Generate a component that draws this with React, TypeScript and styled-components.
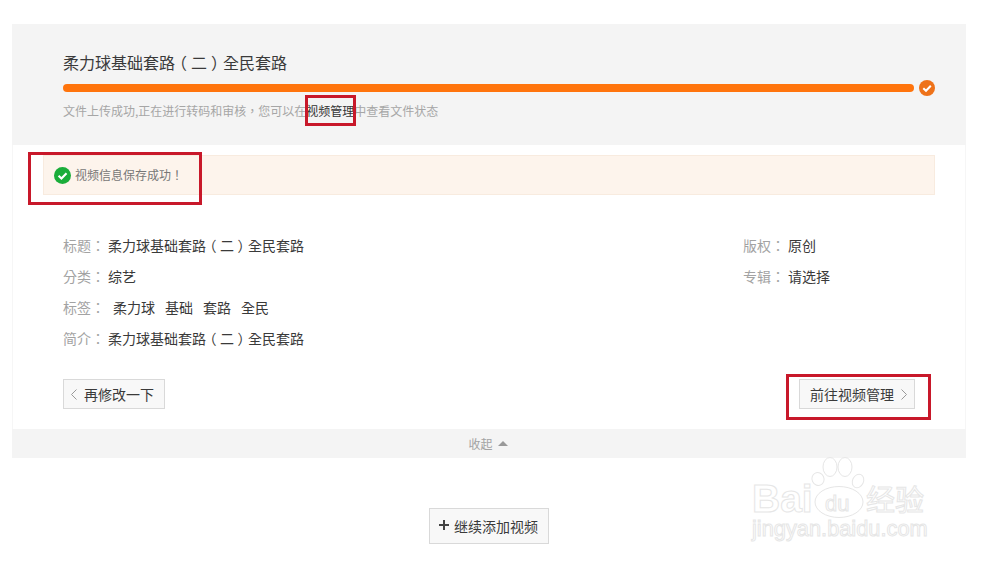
import React from "react";
import styled, { createGlobalStyle } from "styled-components";

const Global = createGlobalStyle`
  html, body { margin: 0; padding: 0; background: #fff; }
  body { font-family: "Noto Sans CJK TC", "Noto Sans CJK SC", "Liberation Sans", sans-serif; }
`;
const Page = styled.div`
  position: relative;
  width: 981px;
  height: 563px;
  overflow: hidden;
  padding: 24px 15px 0 12px;
  box-sizing: border-box;
`;
const Panel = styled.section`
  box-shadow: inset 1px 0 0 #f6f6f6, inset -1px 0 0 #f6f6f6;
`;
const Head = styled.header`
  height: 121px;
  box-sizing: border-box;
  background: #f4f4f4;
  padding: 26px 31px 0 51px;
`;
const Title = styled.h1`
  margin: 0;
  font-size: 16px;
  font-weight: 400;
  line-height: 24px;
  color: #3a3a3a;
`;
const Paren = styled.span`
  font-feature-settings: "halt";
  padding: 0 0.25em;
`;
const ProgressRow = styled.div`
  display: flex;
  align-items: center;
  gap: 5px;
  height: 16px;
  margin-top: 6px;
`;
const Bar = styled.div`
  flex: 1;
  height: 8px;
  border-radius: 4px;
  background: #ff740c;
`;
const Desc = styled.p`
  margin: 5px 0 0;
  font-size: 12px;
  line-height: 20px;
  color: #a6a6a6;
  white-space: nowrap;
`;
const DescLink = styled.span`
  color: #333;
`;
const Body = styled.div`
  padding: 10px 31px 0 31px;
`;
const Notice = styled.div`
  display: flex;
  align-items: center;
  gap: 4px;
  height: 40px;
  box-sizing: border-box;
  padding-left: 10px;
  background: #fdf4ec;
  border: 1px solid #f8ebdf;
  font-size: 12px;
  line-height: 18px;
  color: #777;
`;
const Info = styled.div`
  display: flex;
  justify-content: space-between;
  padding: 34px 0 1px 20px;
`;
const Column = styled.div<{ $width?: number }>`
  width: ${(p) => (p.$width ? `${p.$width}px` : "auto")};
`;
const Row = styled.div`
  display: flex;
  height: 31px;
  align-items: center;
  font-size: 14px;
  color: #3a3a3a;
  white-space: nowrap;
`;
const Label = styled.span`
  width: 45px;
  color: #a3a3a3;
`;
const Tags = styled.span`
  display: flex;
  gap: 10px;
  margin-left: 5px;
`;
const Actions = styled.div`
  display: flex;
  justify-content: space-between;
  padding: 25px 20px 20px;
`;
const Button = styled.button`
  display: inline-flex;
  align-items: center;
  gap: 7px;
  height: 30px;
  padding: 0 7px;
  box-sizing: border-box;
  background: #f8f8f8;
  border: 1px solid #d9d9d9;
  font: inherit;
  font-size: 14px;
  color: #3a3a3a;
`;
const BackButton = styled(Button)`
  width: 102px;
`;
const NextButton = styled(Button)`
  width: 116px;
  padding: 0 0 0 10px;
`;
const Footer = styled.div`
  height: 29px;
  box-sizing: border-box;
  display: flex;
  align-items: center;
  justify-content: center;
  gap: 5px;
  padding: 0 2px 1px 0;
  background: #f4f4f4;
  font-size: 12px;
  color: #a3a3a3;
`;
const Caret = styled.i`
  width: 0;
  height: 0;
  border-left: 5px solid transparent;
  border-right: 5px solid transparent;
  border-bottom: 5px solid #999;
`;
const AddWrap = styled.div`
  display: flex;
  justify-content: center;
  padding: 50px 0 0;
`;
const AddButton = styled(Button)`
  width: 120px;
  height: 36px;
  gap: 4px;
  padding: 0 0 0 8px;
`;
const PlusIcon = styled.svg`
  flex: none;
  margin-top: -3px;
`;
const Mark = styled.div<{ $x: number; $y: number; $w: number; $h: number }>`
  position: absolute;
  left: ${(p) => p.$x}px;
  top: ${(p) => p.$y}px;
  width: ${(p) => p.$w}px;
  height: ${(p) => p.$h}px;
  box-sizing: border-box;
  border: 3px solid #c8182a;
  pointer-events: none;
`;
const Watermark = styled.svg`
  position: absolute;
  left: 748px;
  top: 455px;
`;

const CheckCircle = ({ color, size }: { color: string; size: number }) => (
  <svg width={size} height={size} viewBox="0 0 16 16" style={{ flex: "none" }}>
    <circle cx="8" cy="8" r="8" fill={color} />
    <path d="M4.3 8.2 7 10.8 11.8 5.8" fill="none" stroke="#fff" strokeWidth="2" />
  </svg>
);
const Chevron = ({ left }: { left?: boolean }) => (
  <svg width="6" height="11" viewBox="0 0 6 11" style={{ flex: "none" }}>
    <path d={left ? "M5.5 .5l-5 5 5 5" : "M.5 .5l5 5-5 5"} fill="none" stroke="#999" strokeWidth="1" />
  </svg>
);
const VideoName = () => (
  <span>
    柔力球基础套路<Paren>（</Paren>二<Paren>）</Paren>全民套路
  </span>
);

const wmStroke = { fill: "#fff", stroke: "#e6e6e6", strokeWidth: 1 };

const App = () => (
  <Page>
    <Global />
    <Panel>
      <Head>
        <Title><VideoName /></Title>
        <ProgressRow>
          <Bar />
          <CheckCircle color="#ee7219" size={16} />
        </ProgressRow>
        <Desc>
          文件上传成功,正在进行转码和审核，您可以在<DescLink>视频管理</DescLink>中查看文件状态
        </Desc>
      </Head>
      <Body>
        <Notice>
          <CheckCircle color="#1aad3a" size={17} />
          视频信息保存成功！
        </Notice>
        <Info>
          <Column>
            <Row><Label>标题：</Label><VideoName /></Row>
            <Row><Label>分类：</Label>综艺</Row>
            <Row>
              <Label>标签：</Label>
              <Tags>
                <span>柔力球</span><span>基础</span><span>套路</span><span>全民</span>
              </Tags>
            </Row>
            <Row><Label>简介：</Label><VideoName /></Row>
          </Column>
          <Column $width={192}>
            <Row><Label>版权：</Label>原创</Row>
            <Row><Label>专辑：</Label>请选择</Row>
          </Column>
        </Info>
        <Actions>
          <BackButton><Chevron left />再修改一下</BackButton>
          <NextButton>前往视频管理<Chevron /></NextButton>
        </Actions>
      </Body>
      <Footer>收起<Caret /></Footer>
    </Panel>
    <AddWrap>
      <AddButton>
        <PlusIcon width="12" height="12" viewBox="0 0 12 12">
          <path d="M6 1v10M1 6h10" stroke="#444" strokeWidth="2" fill="none" />
        </PlusIcon>
        继续添加视频
      </AddButton>
    </AddWrap>
    <Mark $x={305} $y={95} $w={51} $h={31} />
    <Mark $x={28} $y={152} $w={174} $h={53} />
    <Mark $x={786} $y={374} $w={145} $h={46} />
    <Watermark width="185" height="90" viewBox="0 0 185 90" aria-label="Baidu 经验">
      <g {...wmStroke}>
        <ellipse cx="70" cy="24" rx="6" ry="6.5" transform="rotate(-25 70 24)" />
        <ellipse cx="82" cy="12" rx="7" ry="9.5" />
        <ellipse cx="97" cy="12" rx="7" ry="9.5" />
        <ellipse cx="110" cy="26" rx="5.5" ry="7" transform="rotate(25 110 26)" />
        <ellipse cx="91" cy="47" rx="24" ry="15.5" />
      </g>
      <text x="4" y="57" fontFamily="Liberation Sans, sans-serif" fontSize="39" fontWeight="700" {...wmStroke}>Bai</text>
      <text x="77" y="56" fontFamily="Liberation Sans, sans-serif" fontSize="22" {...wmStroke}>du</text>
      <text x="118" y="56" fontFamily="Noto Sans CJK SC, sans-serif" fontSize="29" {...wmStroke}>经验</text>
      <text x="4" y="81" fontFamily="Liberation Sans, sans-serif" fontSize="21.8" {...wmStroke}>jingyan.baidu.com</text>
    </Watermark>
  </Page>
);

export default App;
